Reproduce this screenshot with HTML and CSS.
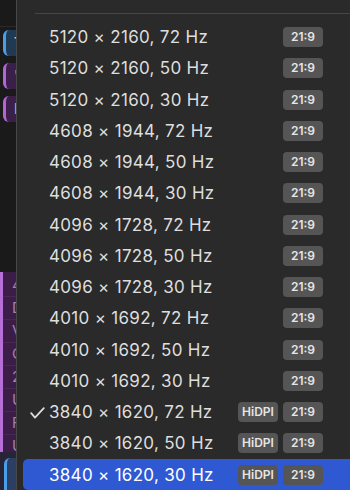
FILE: index.html
```html
<!DOCTYPE html>
<html lang="en">
<head>
  <meta charset="UTF-8">
  <meta name="viewport" content="width=device-width, initial-scale=1.0">
  <title>Resolutions</title>
  <link rel="stylesheet" href="styles.css">
</head>
<body>
<div class="screen">
  <div class="behind">
    <div class="behind-top"></div>
    <div class="tag tag-blue">T</div>
    <div class="tag tag-purple">'</div>
    <div class="tag tag-purple">N</div>
    <div class="behind-gap"></div>
    <div class="notes">
      <div class="note">4</div>
      <div class="note">D</div>
      <div class="note">V</div>
      <div class="note">C</div>
      <div class="note">2</div>
      <div class="note">U</div>
      <div class="note">F</div>
      <div class="note">U</div>
    </div>
    <div class="behind-bottom"><div class="tag-edge"></div></div>
  </div>

  <div class="menu">
    <div class="separator"></div>

    <div class="row"><span class="gutter"></span><span class="label">5120 × 2160, 72 Hz</span><span class="badges"><span class="badge">21:9</span></span></div>
    <div class="row"><span class="gutter"></span><span class="label">5120 × 2160, 50 Hz</span><span class="badges"><span class="badge">21:9</span></span></div>
    <div class="row"><span class="gutter"></span><span class="label">5120 × 2160, 30 Hz</span><span class="badges"><span class="badge">21:9</span></span></div>
    <div class="row"><span class="gutter"></span><span class="label">4608 × 1944, 72 Hz</span><span class="badges"><span class="badge">21:9</span></span></div>
    <div class="row"><span class="gutter"></span><span class="label">4608 × 1944, 50 Hz</span><span class="badges"><span class="badge">21:9</span></span></div>
    <div class="row"><span class="gutter"></span><span class="label">4608 × 1944, 30 Hz</span><span class="badges"><span class="badge">21:9</span></span></div>
    <div class="row"><span class="gutter"></span><span class="label">4096 × 1728, 72 Hz</span><span class="badges"><span class="badge">21:9</span></span></div>
    <div class="row"><span class="gutter"></span><span class="label">4096 × 1728, 50 Hz</span><span class="badges"><span class="badge">21:9</span></span></div>
    <div class="row"><span class="gutter"></span><span class="label">4096 × 1728, 30 Hz</span><span class="badges"><span class="badge">21:9</span></span></div>
    <div class="row"><span class="gutter"></span><span class="label">4010 × 1692, 72 Hz</span><span class="badges"><span class="badge">21:9</span></span></div>
    <div class="row"><span class="gutter"></span><span class="label">4010 × 1692, 50 Hz</span><span class="badges"><span class="badge">21:9</span></span></div>
    <div class="row"><span class="gutter"></span><span class="label">4010 × 1692, 30 Hz</span><span class="badges"><span class="badge">21:9</span></span></div>
    <div class="row">
      <span class="gutter">
        <svg class="check" width="15" height="12" viewBox="0 0 15 12"><polyline points="1.2,6.2 5,10.6 13.8,1.2" fill="none" stroke="#dcdcdc" stroke-width="1.8" stroke-linecap="round" stroke-linejoin="round"/></svg>
      </span>
      <span class="label">3840 × 1620, 72 Hz</span><span class="badges"><span class="badge">HiDPI</span><span class="badge">21:9</span></span>
    </div>
    <div class="row"><span class="gutter"></span><span class="label">3840 × 1620, 50 Hz</span><span class="badges"><span class="badge">HiDPI</span><span class="badge">21:9</span></span></div>
    <div class="row selected"><span class="gutter"></span><span class="label">3840 × 1620, 30 Hz</span><span class="badges"><span class="badge">HiDPI</span><span class="badge">21:9</span></span></div>
  </div>
</div>
</body>
</html>
```

FILE: styles.css
```css
html, body { margin: 0; padding: 0; }
body { background: #1b1b1b; font-family: Inter, "Noto Sans", sans-serif; overflow: hidden; }

.screen { display: flex; width: 350px; height: 490px; overflow: hidden; }

/* window peeking out behind the menu */
.behind { width: 16px; flex: none; display: flex; flex-direction: column; overflow: hidden; background: #1a1a1a; }
.behind-top { height: 26px; border-bottom: 1px solid #2a2a2a; flex: none; }
.tag {
    height: 26px;
    margin: 3px 0 3px 3px;
    border-radius: 6px 0 0 6px;
    padding-left: 8px;
    font-size: 14px;
    line-height: 26px;
    font-weight: 600;
    flex: none;
}
.tag-blue { background: #1f3a52; border-left: 3px solid #4a9ee8; color: #a9c8e4; margin-top: 3px; }
.tag-purple { background: #3a1f49; border-left: 3px solid #b464d4; color: #b996c8; margin-top: 4px; }
.behind-gap { height: 147px; flex: none; }
.notes { background: #3b1d48; border-left: 3px solid #b56fd6; flex: none; height: 178px; padding-top: 2px; }
.note { height: 22px; line-height: 22px; padding-left: 9px; font-size: 15px; color: #9d82ab; border-bottom: 1px solid #432a50; }
.behind-bottom { flex: 1; background: #262436; padding: 6px 0 0 4px; }
.tag-edge { height: 40px; border-left: 3px solid #4a9ee8; background: #2c3f63; border-radius: 6px 0 0 0; }

.menu {
    flex: 1;
    background: #2a2a2a;
    border-left: 1px solid #474747;
    padding-top: 13px;
}
.separator { height: 1px; background: #464646; margin-left: 18px; margin-bottom: 7.4px; }

.row {
    display: flex;
    align-items: center;
    height: 31.25px;
    margin-left: 6px;
    padding-left: 7px;
    padding-right: 27px;
    border-radius: 5px 0 0 5px;
    color: #dedede;
    font-size: 17px;
    letter-spacing: 0.3px;
}
.row.selected { background: #2f59d3; color: #fff; }
.gutter { width: 19px; flex: none; display: flex; align-items: center; }
.check { display: block; margin-top: 1px; }
.label { flex: 1; white-space: nowrap; }
.badges { display: flex; gap: 5px; letter-spacing: 0; }
.badge {
    background: #555;
    color: #e6e6e6;
    border-radius: 4px;
    height: 20px;
    line-height: 20px;
    min-width: 40px;
    padding: 0 3px;
    box-sizing: border-box;
    text-align: center;
    font-size: 12px;
    font-weight: 600;
}
```
